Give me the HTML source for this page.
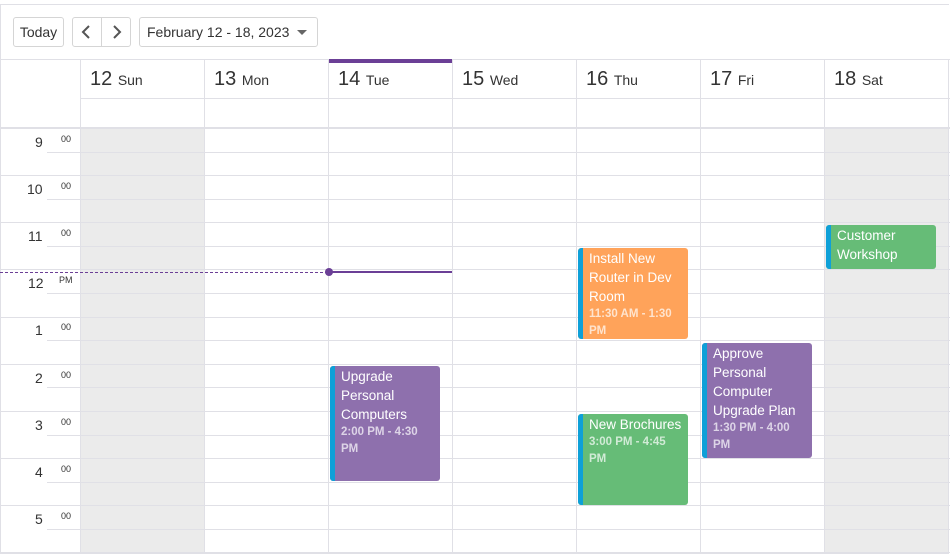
<!DOCTYPE html>
<html><head><style>
*{box-sizing:border-box;margin:0;padding:0}
body{width:950px;height:559px;background:#fff;font-family:"Liberation Sans",Arial,sans-serif;color:#333;position:relative;overflow:hidden}
.a{position:absolute}
.btn{position:absolute;top:17px;height:30px;border:1px solid #d5d5d5;border-radius:3px;background:#fff;font-size:14px;line-height:28px;color:#333}
.hl{position:absolute;height:1px;background:#e0e0e6}
.vl{position:absolute;width:1px;background:#e0e0e6}
.ev{position:absolute;border-radius:3px;color:#fff;padding:1px 4px 0 11px;font-size:13.5px;line-height:19px;overflow:hidden}
.ev:before{content:"";position:absolute;left:0;top:0;bottom:0;width:5px;background:#0ea0d8;border-radius:3px 0 0 3px}
.ev small{display:block;font-size:11.5px;font-weight:bold;color:rgba(255,255,255,.7);line-height:17px}
.tl{position:absolute;font-size:14px;color:#333}
.tm{position:absolute;font-size:9px;color:#333}
.dh{position:absolute;top:68px;font-size:20px;color:#333}
.dh span{font-size:14px}
</style></head><body>
<div class="a" style="left:0;top:4px;width:949px;height:550px;border:1px solid #e0e0e6;border-right:none"></div>
<div class="btn" style="left:13px;width:51px;text-align:center">Today</div>
<div class="btn" style="left:72px;width:59px"></div>
<div class="a" style="left:101px;top:18px;width:1px;height:28px;background:#d5d5d5"></div>
<svg class="a" style="left:80px;top:24px" width="14" height="16"><path d="M9 2 L3 8 L9 14" stroke="#555" stroke-width="2" fill="none"/></svg>
<svg class="a" style="left:110px;top:24px" width="14" height="16"><path d="M4 2 L10 8 L4 14" stroke="#555" stroke-width="2" fill="none"/></svg>
<div class="btn" style="left:139px;width:179px;padding-left:7px">February 12 - 18, 2023</div>
<svg class="a" style="left:297px;top:29px" width="12" height="8"><path d="M0 1 L10 1 L5 6Z" fill="#666"/></svg>
<div class="a" style="left:81px;top:129px;width:123px;height:424px;background:#ebebeb"></div>
<div class="a" style="left:825px;top:129px;width:124px;height:424px;background:#ebebeb"></div>
<div class="hl" style="left:0;top:59px;width:950px"></div>
<div class="hl" style="left:80px;top:98px;width:870px"></div>
<div class="hl" style="left:0;top:127px;width:950px;height:2px"></div>
<div class="a" style="left:329px;top:59px;width:123px;height:4px;background:#6b3f96"></div>
<div class="hl" style="left:47px;top:152px;width:903px"></div>
<div class="hl" style="left:0;top:175px;width:950px"></div>
<div class="hl" style="left:47px;top:199px;width:903px"></div>
<div class="hl" style="left:0;top:222px;width:950px"></div>
<div class="hl" style="left:47px;top:246px;width:903px"></div>
<div class="hl" style="left:0;top:269px;width:950px"></div>
<div class="hl" style="left:47px;top:293px;width:903px"></div>
<div class="hl" style="left:0;top:317px;width:950px"></div>
<div class="hl" style="left:47px;top:340px;width:903px"></div>
<div class="hl" style="left:0;top:364px;width:950px"></div>
<div class="hl" style="left:47px;top:387px;width:903px"></div>
<div class="hl" style="left:0;top:411px;width:950px"></div>
<div class="hl" style="left:47px;top:435px;width:903px"></div>
<div class="hl" style="left:0;top:458px;width:950px"></div>
<div class="hl" style="left:47px;top:482px;width:903px"></div>
<div class="hl" style="left:0;top:505px;width:950px"></div>
<div class="hl" style="left:47px;top:529px;width:903px"></div>
<div class="hl" style="left:0;top:552px;width:950px"></div>
<div class="vl" style="left:80px;top:59px;height:494px"></div>
<div class="vl" style="left:204px;top:59px;height:494px"></div>
<div class="vl" style="left:328px;top:59px;height:494px"></div>
<div class="vl" style="left:452px;top:59px;height:494px"></div>
<div class="vl" style="left:576px;top:59px;height:494px"></div>
<div class="vl" style="left:700px;top:59px;height:494px"></div>
<div class="vl" style="left:824px;top:59px;height:494px"></div>
<div class="vl" style="left:948px;top:59px;height:494px"></div>
<div class="dh" style="left:90px">12 <span>Sun</span></div>
<div class="dh" style="left:214px">13 <span>Mon</span></div>
<div class="dh" style="left:338px">14 <span>Tue</span></div>
<div class="dh" style="left:462px">15 <span>Wed</span></div>
<div class="dh" style="left:586px">16 <span>Thu</span></div>
<div class="dh" style="left:710px">17 <span>Fri</span></div>
<div class="dh" style="left:834px">18 <span>Sat</span></div>
<div class="tl" style="left:35px;top:134px">9</div><div class="tm" style="left:61px;top:134px">00</div>
<div class="tl" style="left:27px;top:181px">10</div><div class="tm" style="left:61px;top:181px">00</div>
<div class="tl" style="left:28px;top:228px">11</div><div class="tm" style="left:61px;top:228px">00</div>
<div class="tl" style="left:28px;top:275px">12</div><div class="tm" style="left:59px;top:275px">PM</div>
<div class="tl" style="left:35px;top:322px">1</div><div class="tm" style="left:61px;top:322px">00</div>
<div class="tl" style="left:35px;top:370px">2</div><div class="tm" style="left:61px;top:370px">00</div>
<div class="tl" style="left:35px;top:417px">3</div><div class="tm" style="left:61px;top:417px">00</div>
<div class="tl" style="left:35px;top:464px">4</div><div class="tm" style="left:61px;top:464px">00</div>
<div class="tl" style="left:35px;top:511px">5</div><div class="tm" style="left:61px;top:511px">00</div>
<div class="a" style="left:0;top:272px;width:328px;border-top:1px dashed #6b3f96"></div>
<div class="a" style="left:329px;top:271px;width:123px;height:2px;background:#6b3f96"></div>
<div class="a" style="left:325px;top:268px;width:8px;height:8px;border-radius:50%;background:#6b3f96"></div>
<div class="ev" style="left:826px;top:225px;width:110px;height:44px;background:#66bc77">Customer Workshop</div>
<div class="ev" style="left:578px;top:248px;width:110px;height:91px;background:#ffa35a">Install New Router in Dev Room<small>11:30 AM - 1:30 PM</small></div>
<div class="ev" style="left:330px;top:366px;width:110px;height:115px;background:#8e70ad">Upgrade Personal Computers<small>2:00 PM - 4:30 PM</small></div>
<div class="ev" style="left:578px;top:414px;width:110px;height:91px;background:#66bc77">New Brochures<small>3:00 PM - 4:45 PM</small></div>
<div class="ev" style="left:702px;top:343px;width:110px;height:115px;background:#8e70ad">Approve Personal Computer Upgrade Plan<small>1:30 PM - 4:00 PM</small></div>
</body></html>
